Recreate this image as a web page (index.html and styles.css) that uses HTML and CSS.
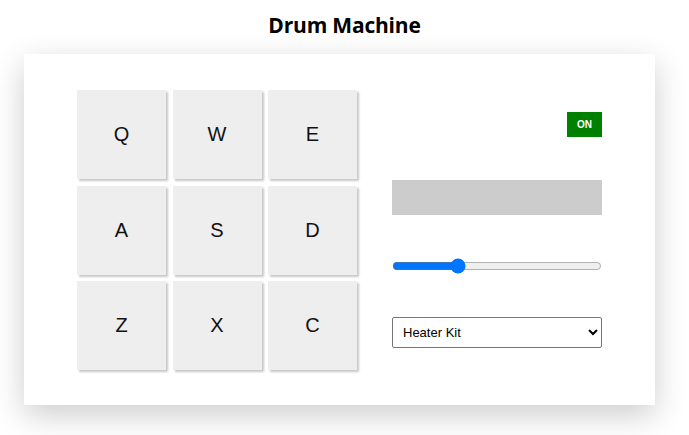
FILE: index.html
```html
<!DOCTYPE html>
<html>
<head>
<meta charset="utf-8">
<link rel="stylesheet" href="styles.css">
</head>
<body>
<h1 class="title">Drum Machine</h1>
<div class="machine">
  <div class="pads">
    <button class="pad">Q</button>
    <button class="pad">W</button>
    <button class="pad">E</button>
    <button class="pad">A</button>
    <button class="pad">S</button>
    <button class="pad">D</button>
    <button class="pad">Z</button>
    <button class="pad">X</button>
    <button class="pad">C</button>
  </div>
  <div class="controls">
    <button class="power">ON</button>
    <div class="display"></div>
    <input class="volume" type="range" min="0" max="100" value="30">
    <select class="kit">
      <option>Heater Kit</option>
      <option>Smooth Piano Kit</option>
    </select>
  </div>
</div>
</body>
</html>
```

FILE: styles.css
```css
html, body {
  margin: 0;
  padding: 0;
  background: #ffffff;
}

body {
  font-family: "Liberation Sans", Arial, sans-serif;
  color: #000;
  min-height: 435px;
  padding-bottom: 30px;
  box-sizing: border-box;
}

.title {
  margin: 0;
  padding-top: 10px;
  height: 44px;
  box-sizing: border-box;
  text-align: center;
  font-family: "Open Sans", "Noto Sans", sans-serif;
  font-weight: 700;
  font-size: 21px;
  line-height: 30px;
  letter-spacing: -0.2px;
}

.machine {
  margin-top: 10px;
  margin-left: 24px;
  width: 631px;
  box-sizing: border-box;
  padding: 36px 53px 35px;
  background: #fff;
  display: flex;
  gap: 35px;
  box-shadow: 0 10px 30px rgba(0, 0, 0, 0.2);
}

.pads {
  display: grid;
  grid-template-columns: repeat(3, 89px);
  grid-auto-rows: 89px;
  gap: 6.5px;
}

.pad {
  border: none;
  margin: 0;
  padding: 0;
  background: #eeeeee;
  font-family: "Liberation Sans", Arial, sans-serif;
  font-size: 20px;
  color: #111;
  box-shadow: 2px 2px 2px rgba(0, 0, 0, 0.22);
}

.controls {
  width: 210px;
  display: flex;
  flex-direction: column;
  justify-content: space-around;
}

.power {
  align-self: flex-end;
  width: 35px;
  height: 25px;
  border: none;
  margin: 0;
  padding: 0;
  background: #008000;
  color: #fff;
  font-family: "Liberation Sans", Arial, sans-serif;
  font-weight: 700;
  font-size: 10px;
}

.display {
  height: 35px;
  background: #cccccc;
}

.volume {
  width: 100%;
  height: 16px;
  margin: 0;
}

.kit {
  height: 31px;
  width: 100%;
  margin: 0;
  padding: 0 4px 0 6px;
  border: 1px solid #767676;
  border-radius: 2px;
  background: #fff;
  font-family: "Liberation Sans", Arial, sans-serif;
  font-size: 13px;
  color: #000;
}
```
